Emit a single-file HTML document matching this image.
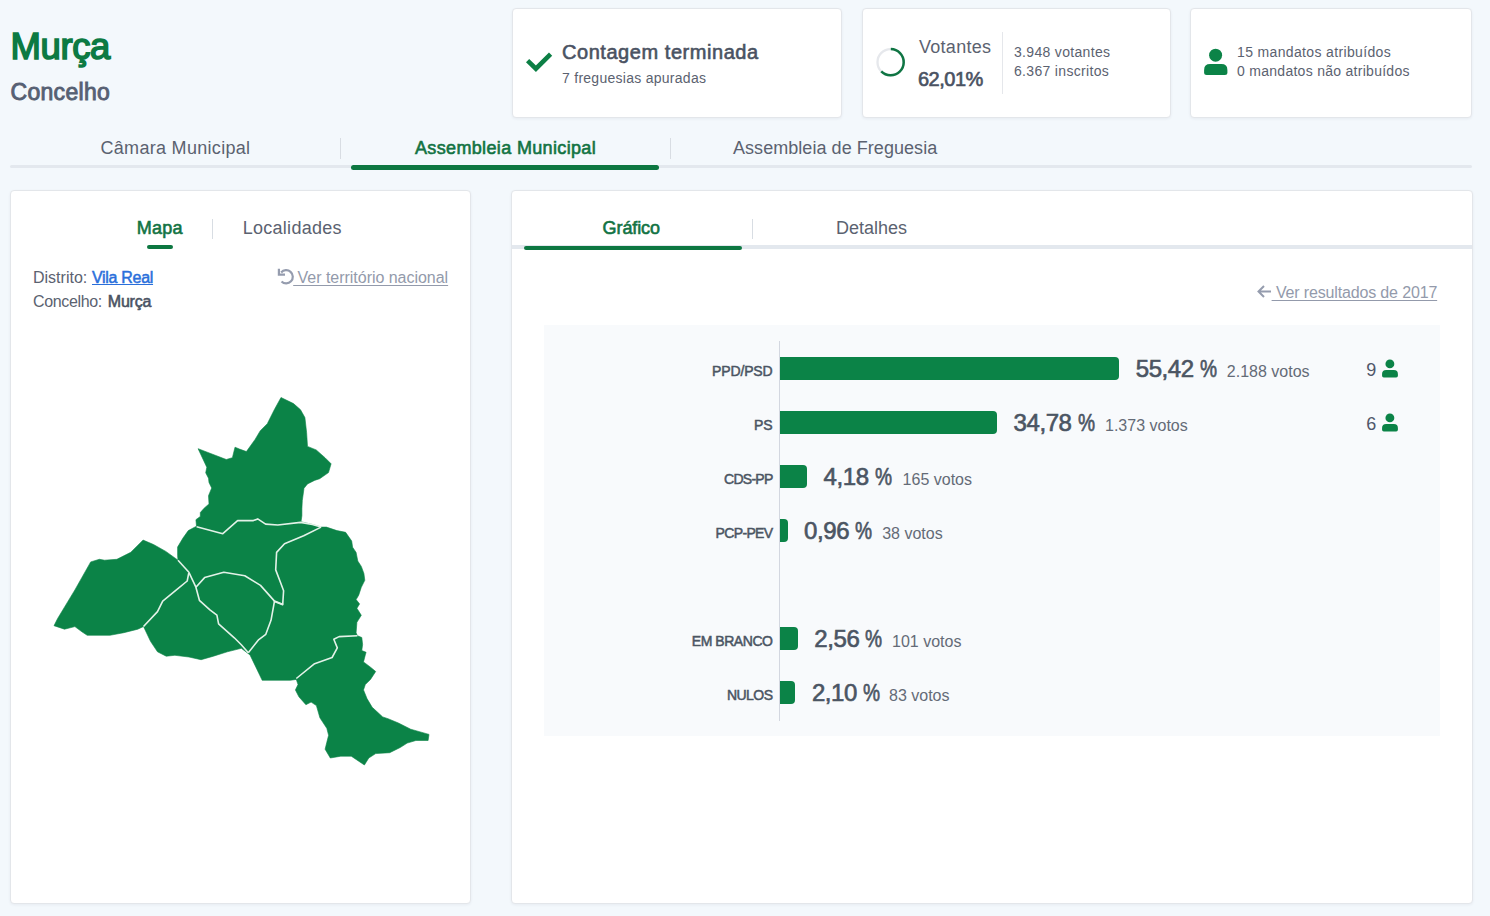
<!DOCTYPE html>
<html><head><meta charset="utf-8"><style>
*{margin:0;padding:0;box-sizing:border-box}
html,body{width:1490px;height:916px;overflow:hidden;background:#f3f8fc;font-family:"Liberation Sans",sans-serif}
.t{position:absolute;white-space:nowrap;line-height:1}
.card{position:absolute;background:#fff;border:1px solid #e3e6ea;border-radius:4px;box-shadow:0 1px 3px rgba(30,40,60,.06)}
.ab{position:absolute}
</style></head><body>
<div class="t" id="h1" style="left:10.5px;top:28.60px;font-size:36.5px;color:#0c7a43;font-weight:400;letter-spacing:-0.4px;-webkit-text-stroke:1.6px #0c7a43;">Murça</div>
<div class="t" id="h2" style="left:10.5px;top:81.03px;font-size:23px;color:#566073;font-weight:400;letter-spacing:0.3px;-webkit-text-stroke:0.9px #566073;">Concelho</div>
<div class="card" style="left:512px;top:8px;width:330px;height:110px"></div>
<div class="card" style="left:862px;top:8px;width:309px;height:110px"></div>
<div class="card" style="left:1190px;top:8px;width:282px;height:110px"></div>
<svg class="ab" style="left:524px;top:50px" width="30" height="24" viewBox="0 0 30 24"><path d="M3.6 10.6 L11.9 18.7 L26.6 4.1" fill="none" stroke="#0c7f45" stroke-width="4.6"/></svg>
<div class="t" id="c1" style="left:562px;top:41.97px;font-size:20px;color:#4a5262;font-weight:400;letter-spacing:0.55px;-webkit-text-stroke:0.6px #4a5262;">Contagem terminada</div>
<div class="t" id="c1b" style="left:562px;top:70.95px;font-size:14px;color:#5b6270;font-weight:400;letter-spacing:0.27px;">7 freguesias apuradas</div>
<svg class="ab" style="left:874px;top:46px" width="33" height="33" viewBox="0 0 33 33"><circle cx="16.6" cy="16.2" r="13.1" fill="none" stroke="#e6e8ec" stroke-width="2.3"/><circle cx="16.6" cy="16.2" r="13.1" fill="none" stroke="#0f7543" stroke-width="2.5" stroke-dasharray="51 100" transform="rotate(-89 16.6 16.2)"/></svg>
<div class="t" id="v1" style="left:919px;top:38.46px;font-size:18px;color:#5b6270;font-weight:400;letter-spacing:0.28px;">Votantes</div>
<div class="t" id="v2" style="left:918px;top:68.77px;font-size:20px;color:#4a5262;font-weight:400;letter-spacing:-0.5px;-webkit-text-stroke:0.65px #4a5262;">62,01%</div>
<div class="ab" style="left:1002px;top:32px;width:1px;height:62px;background:#e5e7eb"></div>
<div class="t" id="v3" style="left:1014px;top:44.55px;font-size:14px;color:#5b6270;font-weight:400;letter-spacing:0.32px;">3.948 votantes</div>
<div class="t" id="v4" style="left:1014px;top:63.65px;font-size:14px;color:#5b6270;font-weight:400;letter-spacing:0.32px;">6.367 inscritos</div>
<svg class="ab" style="left:1204px;top:48px" width="24.00" height="28.00" viewBox="0 0 24 28"><circle cx="11.6" cy="7.2" r="6.5" fill="#0b8347"/><path d="M0.1 24.6 L0.1 22 Q0.1 16.1 6.1 16.1 L17.4 16.1 Q23.4 16.1 23.4 22 L23.4 24.6 Q23.4 27.1 20.9 27.1 L2.6 27.1 Q0.1 27.1 0.1 24.6 Z" fill="#0b8347"/></svg>
<div class="t" id="m1" style="left:1237px;top:44.55px;font-size:14px;color:#5b6270;font-weight:400;letter-spacing:0.35px;">15 mandatos atribuídos</div>
<div class="t" id="m2" style="left:1237px;top:63.65px;font-size:14px;color:#5b6270;font-weight:400;letter-spacing:0.28px;">0 mandatos não atribuídos</div>
<div class="ab" style="left:10px;top:165px;width:1462px;height:3px;background:#e3e8ee;border-radius:2px"></div>
<div class="ab" style="left:351px;top:165px;width:308px;height:4.5px;background:#0d7741;border-radius:3px"></div>
<div class="ab" style="left:340px;top:138px;width:1px;height:21px;background:#d8dde3"></div>
<div class="ab" style="left:670px;top:138px;width:1px;height:21px;background:#d8dde3"></div>
<div class="t" id="t1" style="left:100.5px;top:139.26px;font-size:18px;color:#5b6270;font-weight:400;letter-spacing:0.3px;">Câmara Municipal</div>
<div class="t" id="t2" style="left:415px;top:139.26px;font-size:18px;color:#127343;font-weight:400;letter-spacing:0.35px;-webkit-text-stroke:0.6px #127343;">Assembleia Municipal</div>
<div class="t" id="t3" style="left:733px;top:139.26px;font-size:18px;color:#5b6270;font-weight:400;letter-spacing:0.05px;">Assembleia de Freguesia</div>
<div class="card" style="left:10px;top:190px;width:461px;height:714px"></div>
<div class="card" style="left:511px;top:190px;width:962px;height:714px"></div>
<div class="t" id="p1" style="left:136.7px;top:219.26px;font-size:18px;color:#127343;font-weight:400;letter-spacing:0.3px;-webkit-text-stroke:0.6px #127343;">Mapa</div>
<div class="ab" style="left:147px;top:245px;width:26px;height:3.5px;background:#0d7741;border-radius:2px"></div>
<div class="ab" style="left:212px;top:219px;width:1px;height:20px;background:#d8dde3"></div>
<div class="t" id="p2" style="left:242.7px;top:219.26px;font-size:18px;color:#5b6270;font-weight:400;letter-spacing:0.28px;">Localidades</div>
<div class="t" id="d1" style="left:33px;top:270.46px;font-size:16px;color:#5b6270;font-weight:400;letter-spacing:0px;">Distrito:</div>
<div class="t" id="vr" style="left:92px;top:270.46px;font-size:16px;color:#2a6fdb;font-weight:400;letter-spacing:-0.3px;text-decoration:underline;text-decoration-thickness:1.4px;text-underline-offset:1px;-webkit-text-stroke:0.5px #2a6fdb;">Vila Real</div>
<div class="t" id="d2" style="left:33px;top:294.26px;font-size:16px;color:#5b6270;font-weight:400;letter-spacing:-0.35px;">Concelho:</div>
<div class="t" id="mu" style="left:107.8px;top:294.26px;font-size:16px;color:#4a5262;font-weight:400;letter-spacing:-0.2px;-webkit-text-stroke:0.55px #4a5262;">Murça</div>
<svg class="ab" style="left:272px;top:264px" width="30" height="26" viewBox="0 0 30 26"><path d="M6.9 4.8 L6.9 10.7 L13 10.7" fill="none" stroke="#959cae" stroke-width="2.2"/><path d="M9.14 8.56 A6.6 6.6 0 1 1 9.53 17.47" fill="none" stroke="#959cae" stroke-width="2.2"/></svg>
<div class="t" id="vt" style="left:293.2px;top:270.16px;font-size:16px;color:#939aab;font-weight:400;letter-spacing:-0.03px;text-decoration:underline;text-underline-offset:2px;text-decoration-thickness:1.3px;">&nbsp;Ver território nacional</div>
<svg class="ab" style="left:0;top:0" width="480" height="916" viewBox="0 0 480 916"><polygon points="281.0,397.5 293.5,403.6 300.5,409.7 304.9,417.6 306.6,432.4 307.5,446.4 316.2,449.9 325.0,457.7 331.1,463.8 328.5,472.6 319.7,478.7 314.5,480.4 307.5,483.9 304.0,488.3 302.3,500.5 301.9,508.7 301.9,515.7 301.0,521.8 312.4,524.5 321.1,527.1 326.4,527.1 336.9,530.6 345.6,532.3 351.7,541.0 352.6,547.2 356.1,552.4 357.8,561.1 361.3,566.4 363.9,573.4 364.8,580.3 361.3,587.3 358.7,595.2 356.1,599.6 359.6,603.9 356.9,608.3 361.3,615.3 356.9,622.3 356.1,632.8 357.4,635.7 361.8,637.5 362.6,644.5 361.8,650.6 366.1,652.3 365.3,654.9 363.5,661.9 370.5,667.2 375.7,671.5 370.5,679.4 365.3,684.6 363.5,689.9 367.0,698.6 372.2,707.3 382.7,716.9 388.0,718.7 398.4,723.0 410.7,729.2 429.0,734.4 428.1,740.5 415.9,740.5 407.2,743.1 400.2,747.5 389.7,752.7 375.7,753.6 368.8,758.0 364.4,765.0 356.5,759.7 351.3,756.2 340.8,756.2 330.3,758.0 325.1,749.2 326.8,742.3 328.6,735.3 326.8,728.3 319.9,717.8 316.4,705.6 311.1,702.1 305.9,704.7 298.9,696.8 295.4,689.9 298.0,684.6 296.3,679.4 290.2,680.3 262.2,680.3 250.0,654.9 241.3,648.3 227.3,651.8 213.4,656.2 201.1,659.7 188.9,657.0 174.9,655.3 166.2,656.2 157.5,651.8 150.5,641.3 143.5,626.5 137.8,629.2 123.8,632.7 109.9,635.3 87.2,635.3 81.9,631.8 74.9,626.6 64.5,629.2 54.0,625.7 57.5,618.7 74.9,589.9 90.7,561.9 99.4,559.3 104.6,560.2 116.9,559.3 130.8,552.3 143.1,540.1 153.5,544.5 165.8,551.4 178.0,560.2 177.6,555.7 177.6,547.0 183.0,538.0 188.3,530.6 196.5,526.2 195.9,519.7 200.3,516.4 200.3,512.6 204.1,508.2 209.0,503.9 208.5,495.7 211.7,488.0 209.0,482.6 208.5,478.2 205.7,472.8 206.8,467.3 198.1,448.7 226.3,459.5 232.4,457.7 235.0,447.2 239.4,449.0 246.4,451.6 255.1,439.4 260.3,430.7 267.3,423.7 274.3,409.7" fill="#0b8347" stroke="#0b8347" stroke-width="0.6" stroke-linejoin="round"/><polyline points="196.6,526.7 222.8,533.7 237.6,520.6 253.4,520.6 257.7,518.9 265.6,524.1 277.8,525.0 300.5,522.4 312.4,524.5 321.1,527.1" fill="none" stroke="#e3f2e8" stroke-width="1.6" stroke-linejoin="round"/><polyline points="321.1,527.1 303.7,535.8 284.5,543.7 276.6,552.4 275.7,569.9 281.0,583.8 283.6,590.8 282.7,604.8 274.0,601.3" fill="none" stroke="#e3f2e8" stroke-width="1.6" stroke-linejoin="round"/><polyline points="188.9,572.3 187.2,581.0 177.6,588.9 162.7,601.1 157.5,611.6 143.5,626.5" fill="none" stroke="#e3f2e8" stroke-width="1.6" stroke-linejoin="round"/><polyline points="178.0,560.2 188.9,572.3" fill="none" stroke="#e3f2e8" stroke-width="1.6" stroke-linejoin="round"/><polyline points="188.9,572.3 195.9,587.2 199.4,600.3 209.9,609.9 216.9,615.1 218.6,623.8 234.3,637.8 241.3,644.8 248.3,652.7" fill="none" stroke="#e3f2e8" stroke-width="1.6" stroke-linejoin="round"/><polyline points="195.9,587.2 204.6,577.6 223.8,572.3 244.8,575.8 260.5,585.4 274.5,601.1 283.2,604.6" fill="none" stroke="#e3f2e8" stroke-width="1.6" stroke-linejoin="round"/><polyline points="274.5,601.1 271.0,620.3 265.8,634.3 258.8,639.6 248.3,652.7" fill="none" stroke="#e3f2e8" stroke-width="1.6" stroke-linejoin="round"/><polyline points="296.3,678.5 314.6,663.7 332.1,657.5 337.3,647.9 333.8,639.2 339.1,636.6 357.4,635.7" fill="none" stroke="#e3f2e8" stroke-width="1.6" stroke-linejoin="round"/></svg>
<div class="ab" style="left:512px;top:245px;width:960px;height:3.5px;background:#e3e8ee"></div>
<div class="ab" style="left:524px;top:246px;width:218px;height:4px;background:#0d7741;border-radius:3px"></div>
<div class="ab" style="left:752px;top:219px;width:1px;height:20px;background:#d8dde3"></div>
<div class="t" id="g1" style="left:602.6px;top:219.16px;font-size:18px;color:#127343;font-weight:400;letter-spacing:-0.1px;-webkit-text-stroke:0.6px #127343;">Gráfico</div>
<div class="t" id="g2" style="left:836px;top:219.16px;font-size:18px;color:#5b6270;font-weight:400;">Detalhes</div>
<svg class="ab" style="left:1256px;top:284px" width="16" height="15" viewBox="0 0 16 15"><path d="M15 7.5 L3 7.5 M8 2 L2.5 7.5 L8 13" fill="none" stroke="#959cae" stroke-width="2"/></svg>
<div class="t" id="vres" style="left:1271.6px;top:285.16px;font-size:16px;color:#939aab;font-weight:400;letter-spacing:-0.15px;text-decoration:underline;text-underline-offset:2px;text-decoration-thickness:1.3px;">&nbsp;Ver resultados de 2017</div>
<div class="ab" style="left:544px;top:325px;width:896px;height:411px;background:#f8fafc"></div>
<div class="ab" style="left:779px;top:341px;width:1px;height:380px;background:#d3d7e0"></div>
<div class="t" id="lab0" style="right:717.5px;top:363.85px;font-size:14px;color:#4b5563;font-weight:400;letter-spacing:-0.15px;-webkit-text-stroke:0.5px #4b5563;">PPD/PSD</div>
<div class="ab" style="left:780px;top:357px;width:339.2px;height:23px;background:#0b8347;border-radius:0 4px 4px 0"></div>
<div class="t" id="pct0" style="left:1135.7px;top:357.48px;font-size:24px;color:#4b5563;font-weight:400;letter-spacing:-0.4px;-webkit-text-stroke:0.65px #4b5563;">55,42<span style="display:inline-block;transform:scaleX(.8);transform-origin:0 0;margin-left:6px">%</span></div>
<div class="t" id="vot0" style="left:1226.8px;top:363.76px;font-size:16px;color:#646b77;font-weight:400;">2.188 votos</div>
<div class="t" id="man0" style="left:1366.3px;top:360.66px;font-size:18px;color:#50576a;font-weight:400;">9</div>
<svg class="ab" style="left:1381.6px;top:359.4px" width="16.32" height="19.04" viewBox="0 0 24 28"><circle cx="11.6" cy="7.2" r="6.5" fill="#0b8347"/><path d="M0.1 24.6 L0.1 22 Q0.1 16.1 6.1 16.1 L17.4 16.1 Q23.4 16.1 23.4 22 L23.4 24.6 Q23.4 27.1 20.9 27.1 L2.6 27.1 Q0.1 27.1 0.1 24.6 Z" fill="#0b8347"/></svg>
<div class="t" id="lab1" style="right:717.5px;top:417.85px;font-size:14px;color:#4b5563;font-weight:400;letter-spacing:-0.15px;-webkit-text-stroke:0.5px #4b5563;">PS</div>
<div class="ab" style="left:780px;top:411px;width:217.0px;height:23px;background:#0b8347;border-radius:0 4px 4px 0"></div>
<div class="t" id="pct1" style="left:1013.5px;top:411.48px;font-size:24px;color:#4b5563;font-weight:400;letter-spacing:-0.4px;-webkit-text-stroke:0.65px #4b5563;">34,78<span style="display:inline-block;transform:scaleX(.8);transform-origin:0 0;margin-left:6px">%</span></div>
<div class="t" id="vot1" style="left:1105px;top:417.76px;font-size:16px;color:#646b77;font-weight:400;">1.373 votos</div>
<div class="t" id="man1" style="left:1366.3px;top:414.66px;font-size:18px;color:#50576a;font-weight:400;">6</div>
<svg class="ab" style="left:1381.6px;top:413.4px" width="16.32" height="19.04" viewBox="0 0 24 28"><circle cx="11.6" cy="7.2" r="6.5" fill="#0b8347"/><path d="M0.1 24.6 L0.1 22 Q0.1 16.1 6.1 16.1 L17.4 16.1 Q23.4 16.1 23.4 22 L23.4 24.6 Q23.4 27.1 20.9 27.1 L2.6 27.1 Q0.1 27.1 0.1 24.6 Z" fill="#0b8347"/></svg>
<div class="t" id="lab2" style="right:717.5px;top:471.85px;font-size:14px;color:#4b5563;font-weight:400;letter-spacing:-0.75px;-webkit-text-stroke:0.5px #4b5563;">CDS-PP</div>
<div class="ab" style="left:780px;top:465px;width:27.0px;height:23px;background:#0b8347;border-radius:0 4px 4px 0"></div>
<div class="t" id="pct2" style="left:823.5px;top:465.48px;font-size:24px;color:#4b5563;font-weight:400;letter-spacing:-0.4px;-webkit-text-stroke:0.65px #4b5563;">4,18<span style="display:inline-block;transform:scaleX(.8);transform-origin:0 0;margin-left:6px">%</span></div>
<div class="t" id="vot2" style="left:902.6px;top:471.76px;font-size:16px;color:#646b77;font-weight:400;">165 votos</div>
<div class="t" id="lab3" style="right:717.5px;top:525.85px;font-size:14px;color:#4b5563;font-weight:400;letter-spacing:-0.65px;-webkit-text-stroke:0.5px #4b5563;">PCP-PEV</div>
<div class="ab" style="left:780px;top:519px;width:7.5px;height:23px;background:#0b8347;border-radius:0 4px 4px 0"></div>
<div class="t" id="pct3" style="left:804.0px;top:519.48px;font-size:24px;color:#4b5563;font-weight:400;letter-spacing:-0.4px;-webkit-text-stroke:0.65px #4b5563;">0,96<span style="display:inline-block;transform:scaleX(.8);transform-origin:0 0;margin-left:6px">%</span></div>
<div class="t" id="vot3" style="left:882.2px;top:525.76px;font-size:16px;color:#646b77;font-weight:400;">38 votos</div>
<div class="t" id="lab5" style="right:717.5px;top:633.85px;font-size:14px;color:#4b5563;font-weight:400;letter-spacing:-0.44999999999999996px;-webkit-text-stroke:0.5px #4b5563;">EM BRANCO</div>
<div class="ab" style="left:780px;top:627px;width:17.8px;height:23px;background:#0b8347;border-radius:0 4px 4px 0"></div>
<div class="t" id="pct5" style="left:814.3px;top:627.48px;font-size:24px;color:#4b5563;font-weight:400;letter-spacing:-0.4px;-webkit-text-stroke:0.65px #4b5563;">2,56<span style="display:inline-block;transform:scaleX(.8);transform-origin:0 0;margin-left:6px">%</span></div>
<div class="t" id="vot5" style="left:892px;top:633.76px;font-size:16px;color:#646b77;font-weight:400;">101 votos</div>
<div class="t" id="lab6" style="right:717.5px;top:687.85px;font-size:14px;color:#4b5563;font-weight:400;letter-spacing:-0.55px;-webkit-text-stroke:0.5px #4b5563;">NULOS</div>
<div class="ab" style="left:780px;top:681px;width:15.4px;height:23px;background:#0b8347;border-radius:0 4px 4px 0"></div>
<div class="t" id="pct6" style="left:811.9px;top:681.48px;font-size:24px;color:#4b5563;font-weight:400;letter-spacing:-0.4px;-webkit-text-stroke:0.65px #4b5563;">2,10<span style="display:inline-block;transform:scaleX(.8);transform-origin:0 0;margin-left:6px">%</span></div>
<div class="t" id="vot6" style="left:889px;top:687.76px;font-size:16px;color:#646b77;font-weight:400;">83 votos</div>
</body></html>
